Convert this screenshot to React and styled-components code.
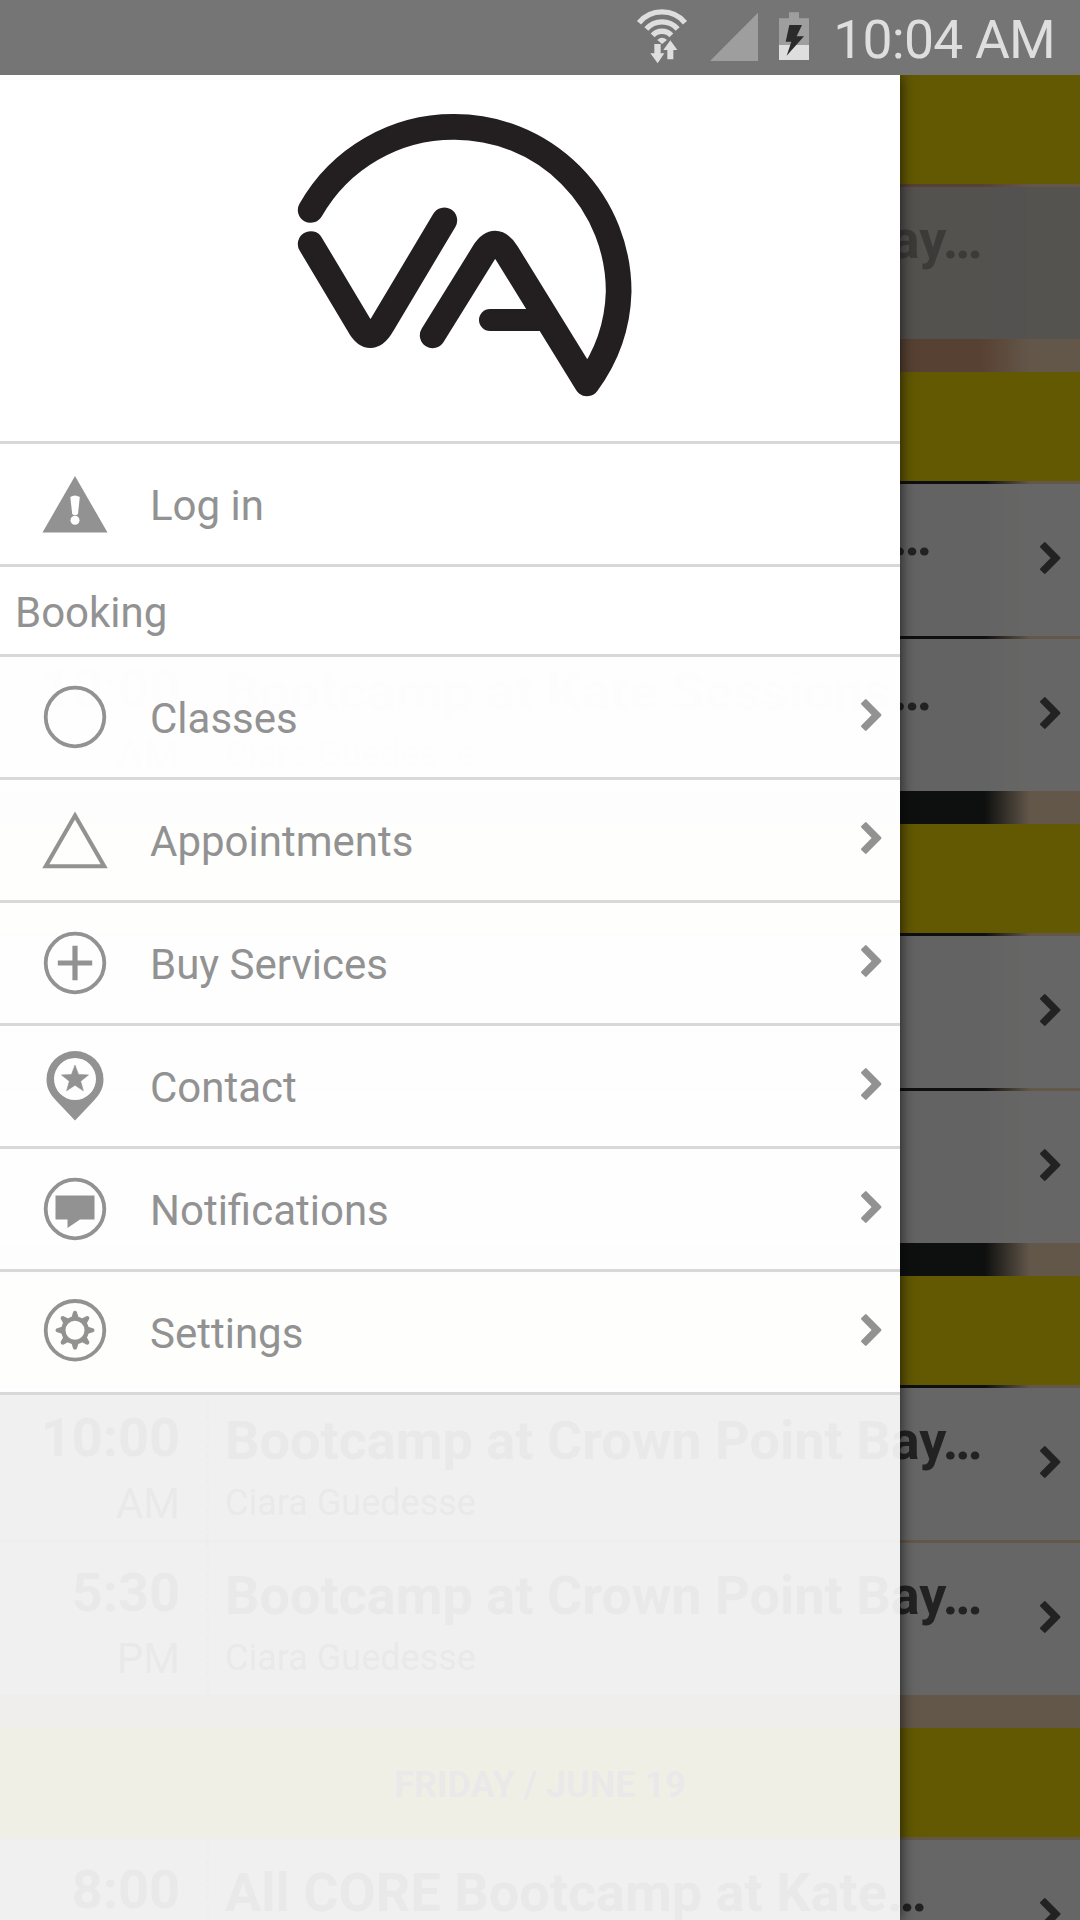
import React from "react";
import styled, { createGlobalStyle, css } from "styled-components";

const GlobalStyle = createGlobalStyle`
  * { box-sizing: border-box; }
  body {
    margin: 0;
    background: #63574a;
    font-family: Roboto, "Noto Sans", sans-serif;
  }
`;

const Screen = styled.div`
  position: relative;
  display: flex;
  flex-direction: column;
  width: 1080px;
  height: 1920px;
  overflow: hidden;
`;

const StatusBar = styled.header`
  position: relative;
  z-index: 2;
  display: flex;
  flex: none;
  align-items: flex-start;
  justify-content: flex-end;
  height: 75px;
  padding-right: 25px;
  background: #757575;
`;

const StatusIcon = styled.svg`
  flex: none;
  height: 75px;
  width: ${(p) => p.$width}px;
  margin-right: ${(p) => p.$gap}px;
`;

const Clock = styled.span`
  width: 224px;
  color: #dedede;
  font-size: 53.5px;
  letter-spacing: -0.8px;
  line-height: 64px;
  padding-top: 8px;
  text-align: right;
  white-space: nowrap;
`;

/* Schedule shown dimmed behind the drawer, over a blurred photo */
const Schedule = styled.main`
  display: flex;
  flex: 1;
  flex-direction: column;
  gap: 33px;
  min-height: 0;
  background:
    linear-gradient(90deg, #574132 0, #574132 980px, #63574a 1030px) 0 0 / 100% 340px no-repeat,
    linear-gradient(90deg, #0e100f 0, #0e100f 985px, #63574a 1030px) 0 340px / 100% 973px no-repeat,
    #63574a;
`;

const Day = styled.section`
  display: flex;
  flex: none;
  flex-direction: column;
  gap: 3px;
`;

const DayHeader = styled.h2`
  display: flex;
  align-items: center;
  justify-content: center;
  height: 109px;
  margin: 0;
  padding-top: 5px;
  background: #635903;
  color: #222;
  font-size: 36px;
  font-weight: 700;
`;

const Session = styled.article`
  display: flex;
  height: 152px;
  padding-right: 15px;
  background: ${(p) => (p.$muted ? "rgba(84, 83, 81, 0.97)" : "rgba(103, 103, 103, 0.96)")};
  color: ${(p) => (p.$muted ? "#3c3b3a" : "#222")};
`;

const TimeColumn = styled.div`
  display: flex;
  flex: none;
  flex-direction: column;
  align-items: flex-end;
  width: 209px;
  padding: 18px 26px 0 0;
  border-right: 3px dashed #555;
`;

const Hour = styled.span`
  font-size: 54px;
  font-weight: 700;
  line-height: 64px;
`;

const Meridiem = styled.span`
  font-size: 42px;
  line-height: 50px;
  margin-top: 9px;
`;

const Details = styled.div`
  display: flex;
  flex: 1;
  flex-direction: column;
  min-width: 0;
  padding: 21px 0 0 16px;
`;

const Title = styled.span`
  font-size: 54px;
  font-weight: 700;
  line-height: 64px;
  white-space: nowrap;
`;

const Instructor = styled.span`
  font-size: 36px;
  line-height: 42px;
  margin-top: 9px;
`;

const chevronBox = css`
  flex: none;
  align-self: center;
  width: 26px;
  height: 36px;
  margin-bottom: 4px;
`;

const ChevronSvg = styled.svg`
  ${chevronBox}
  color: ${(p) => p.$color};
`;

/* Drawer slides over the schedule */
const Drawer = styled.nav`
  position: absolute;
  z-index: 1;
  top: 75px;
  left: 0;
  bottom: 0;
  width: 900px;
  background: rgba(255, 255, 255, 0.9);
  box-shadow: 0 0 14px rgba(0, 0, 0, 0.75);
`;

const Panel = styled.div`
  display: flex;
  align-items: center;
  border-bottom: 3px solid #d8d8d8;
  background: ${(p) => (p.$solid ? "#fff" : "rgba(255, 255, 255, 0.9)")};
  background-clip: padding-box;
`;

const LogoPanel = styled(Panel)`
  align-items: flex-start;
  height: 369px;
  padding: 15px 0 0 280px;
`;

const SectionLabel = styled(Panel)`
  height: 90px;
  padding: 4px 15px 0;
  color: #929292;
  font-size: 42px;
`;

const MenuItem = styled(Panel)`
  height: 123px;
  padding: 0 14px 0 35px;
  color: #929292;
`;

const MenuIcon = styled.svg`
  flex: none;
  width: 80px;
  height: 80px;
`;

const MenuLabel = styled.span`
  flex: 1;
  padding: 3px 0 0 35px;
  font-size: 42px;
  line-height: 50px;
`;

function Chevron({ color }) {
  return (
    <ChevronSvg $color={color} viewBox="0 0 26 36" aria-hidden="true">
      <path
        d="M5 2.4 L1.3 6 Q.6 6.8 1.3 7.6 L11.6 18 L1.3 28.400 Q.6 29.200 1.3 30 L5 33.600 Q5.800 34.400 6.600 33.600 L21 19 Q22 18 21 17 L6.600 2.400 Q5.800 1.600 5 2.400 Z"
        fill="currentColor"
      />
    </ChevronSvg>
  );
}

function Logo() {
  return (
    <svg width="380" height="330" viewBox="0 0 1140 990" aria-label="VA">
      <g fill="none" stroke="#231f20" strokeWidth="77" strokeLinecap="round" strokeLinejoin="round">
        <path d="M92 360 A492 492 0 0 1 524 110.500 A492 494 0 0 1 1016 605 A485 485 0 0 1 921 880 L680 489 Q645 433 611 489 L458 736" />
        <path d="M92 462 L236 703 Q271 768 307 703 L493 391" />
        <path d="M630 690 H800" strokeWidth="66" />
      </g>
    </svg>
  );
}

const starPoints = Array.from({ length: 10 }, (_, i) => {
  const r = i % 2 ? 6 : 14.2;
  const a = (Math.PI / 5) * i - Math.PI / 2;
  return `${(40 + r * Math.cos(a)).toFixed(2)},${(33.3 + r * Math.sin(a)).toFixed(2)}`;
}).join(" ");

const ring = <circle cx="40" cy="40" r="29.300" fill="none" stroke="currentColor" strokeWidth="3.800" />;

const glyphs = {
  alert: (
    <>
      <path d="M40 12 L72.500 68.500 H7.500 Z" fill="currentColor" />
      <path d="M35.300 33 Q40 30 44.800 33 L43 50 Q40 52.500 37.200 50 Z" fill="#fff" />
      <circle cx="40" cy="56.300" r="4.500" fill="#fff" />
    </>
  ),
  circle: ring,
  triangle: (
    <path d="M40 15.500 L69.200 66.300 H10.800 Z" fill="none" stroke="currentColor" strokeWidth="4.100" />
  ),
  plus: (
    <>
      {ring}
      <path d="M40 22.800 V57.200 M22.800 40 H57.200" fill="none" stroke="currentColor" strokeWidth="5.200" />
    </>
  ),
  pin: (
    <>
      <path
        d="M40 5 A28.500 28.500 0 0 1 68.500 33.500 C68.500 42 65 48 59 54.500 L40 74.500 L21 54.500 C15 48 11.500 42 11.500 33.500 A28.500 28.500 0 0 1 40 5 Z M40 12 A21 21 0 1 0 40 54 A21 21 0 1 0 40 12 Z"
        fill="currentColor"
        fillRule="evenodd"
      />
      <polygon points={starPoints} fill="currentColor" stroke="currentColor" strokeWidth="0.6" />
    </>
  ),
  message: (
    <>
      {ring}
      <path d="M20.500 26.500 H59.500 V50.500 H45 L32.500 59 V50.500 H20.500 Z" fill="currentColor" />
    </>
  ),
  gear: (
    <g transform="translate(0 -1.700)">
      {ring}
      <circle cx="40" cy="40" r="11.700" fill="none" stroke="currentColor" strokeWidth="4.400" />
      {[0, 45, 90, 135, 180, 225, 270, 315].map((a) => (
        <path
          key={a}
          d="M36 28.500 L38.200 21.500 Q40 19.500 41.800 21.500 L44 28.500 Z"
          fill="currentColor"
          transform={`rotate(${a} 40 40)`}
        />
      ))}
    </g>
  ),
};

const bookingItems = [
  { icon: "circle", label: "Classes" },
  { icon: "triangle", label: "Appointments" },
  { icon: "plus", label: "Buy Services" },
  { icon: "pin", label: "Contact" },
  { icon: "message", label: "Notifications" },
  { icon: "gear", label: "Settings" },
];

const days = [
  { sessions: [{ title: "Bootcamp at Crown Point Bay…", muted: true }] },
  {
    sessions: [
      { title: "Bootcamp at Kate Sessions…" },
      { hour: "10:00", meridiem: "AM", title: "Bootcamp at Kate Sessions…", instructor: "Ciara Guedesse" },
    ],
  },
  { sessions: [{}, {}] },
  {
    sessions: [
      { hour: "10:00", meridiem: "AM", title: "Bootcamp at Crown Point Bay…", instructor: "Ciara Guedesse" },
      { hour: "5:30", meridiem: "PM", title: "Bootcamp at Crown Point Bay…", instructor: "Ciara Guedesse" },
    ],
  },
  {
    label: "FRIDAY / JUNE 19",
    sessions: [{ hour: "8:00", title: "All CORE Bootcamp at Kate…" }],
  },
];

function MenuRow({ icon, label, arrow }) {
  return (
    <MenuItem $solid={!arrow}>
      <MenuIcon viewBox="0 0 80 80" aria-hidden="true">
        {glyphs[icon]}
      </MenuIcon>
      <MenuLabel>{label}</MenuLabel>
      {arrow && <Chevron color="#929292" />}
    </MenuItem>
  );
}

export default function App() {
  return (
    <Screen>
      <GlobalStyle />
      <StatusBar>
        <StatusIcon $width={52} $gap={22} viewBox="48 0 156 225">
          <g fill="none" stroke="#dedede" strokeWidth="16">
            <path d="M57 68 A90 90 0 0 1 195 68" />
            <path d="M79 87 A62 62 0 0 1 173 87" />
            <path d="M98 106 A38 38 0 0 1 154 106" />
          </g>
          <g fill="#dedede">
            <path d="M112 120 Q126 107 141 120 L126 132 Z" />
            <path d="M103 132 H122 V160 H133 L113 190 L91 160 H103 Z" />
            <path d="M142 178 V150 H130 L151 121 L172 150 H160 V178 Z" />
          </g>
        </StatusIcon>
        <StatusIcon $width={48} $gap={21} viewBox="270 0 144 225">
          <path d="M270 183 L414 38 V183 Z" fill="#9e9e9e" />
        </StatusIcon>
        <StatusIcon $width={30} $gap={22} viewBox="477 0 90 225">
          <path d="M507 37 H537 V55 H567 V180 H477 V55 H507 Z" fill="#9e9e9e" />
          <path d="M477 135 H567 V180 H477 Z" fill="#dedede" />
          <path d="M508 75 H546 L530 109 H552 L500 167 L514 125 H497 Z" fill="#2b2b2b" />
        </StatusIcon>
        <Clock>10:04 AM</Clock>
      </StatusBar>

      <Schedule>
        {days.map((day, d) => (
          <Day key={d}>
            <DayHeader>{day.label}</DayHeader>
            {day.sessions.map((s, i) => (
              <Session key={i} $muted={s.muted}>
                <TimeColumn>
                  <Hour>{s.hour}</Hour>
                  <Meridiem>{s.meridiem}</Meridiem>
                </TimeColumn>
                <Details>
                  <Title>{s.title}</Title>
                  <Instructor>{s.instructor}</Instructor>
                </Details>
                {!s.muted && <Chevron color="#222" />}
              </Session>
            ))}
          </Day>
        ))}
      </Schedule>

      <Drawer>
        <LogoPanel $solid>
          <Logo />
        </LogoPanel>
        <MenuRow icon="alert" label="Log in" />
        <SectionLabel $solid>Booking</SectionLabel>
        {bookingItems.map((item) => (
          <MenuRow key={item.label} {...item} arrow />
        ))}
      </Drawer>
    </Screen>
  );
}
